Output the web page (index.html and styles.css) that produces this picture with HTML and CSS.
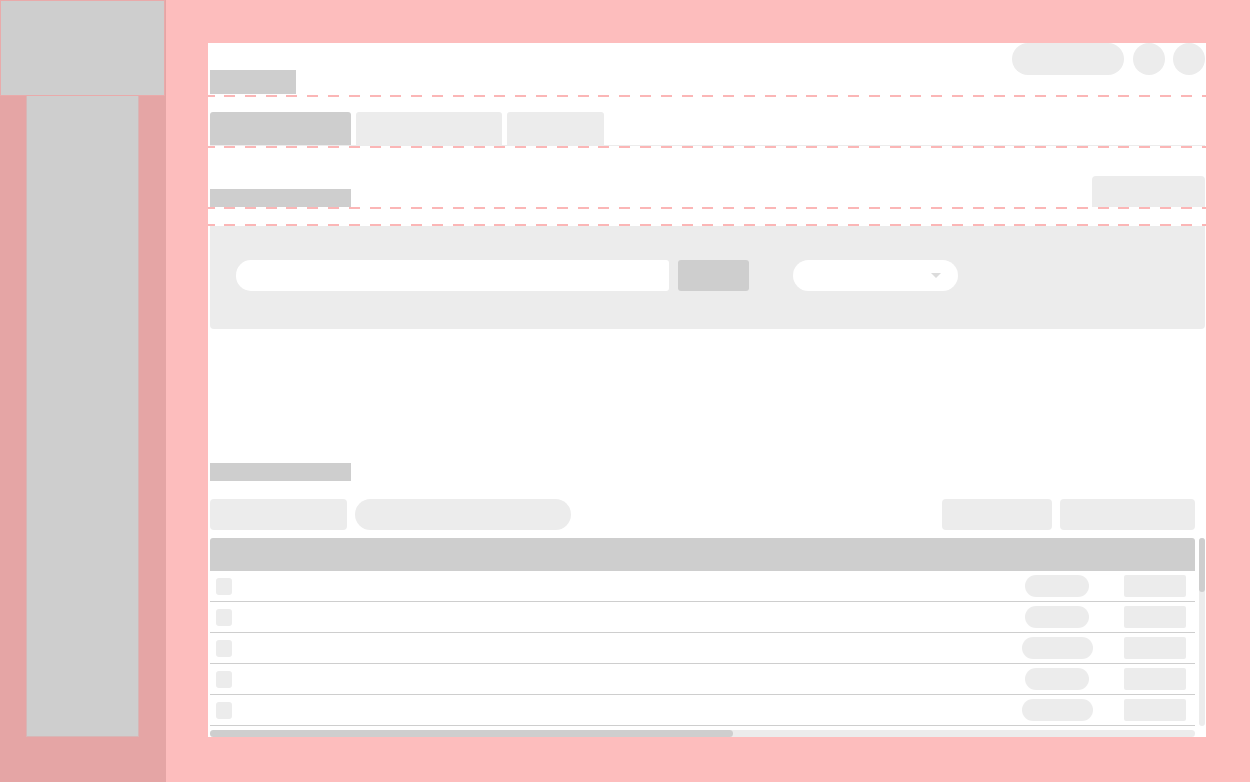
FILE: index.html
```html
<!DOCTYPE html>
<html lang="en">
<head>
<meta charset="utf-8">
<title>Wireframe</title>
<link rel="stylesheet" href="styles.css">
</head>
<body>
<div class="app">
  <aside class="sidebar">
    <div class="side-head"></div>
    <div class="side-col"></div>
  </aside>
  <main class="stage">
    <section class="panel">
      <header class="topbar">
        <div class="title"></div>
        <div class="top-actions">
          <div class="top-pill"></div>
          <div class="circle"></div>
          <div class="circle"></div>
        </div>
      </header>
      <div class="dash"></div>
      <nav class="tabs">
        <div class="tab tab-active"></div>
        <div class="tab tab-2"></div>
        <div class="tab tab-3"></div>
      </nav>
      <div class="dash"></div>
      <div class="section-head">
        <div class="bar"></div>
        <div class="head-btn"></div>
      </div>
      <div class="dash"></div>
      <div class="dash dash-gap"></div>
      <div class="filter">
        <div class="search"></div>
        <div class="search-btn"></div>
        <div class="select">
          <svg class="caret" width="10" height="5" viewBox="0 0 10 5"><polygon points="0,0 10,0 5,5" fill="#dcdcdc"/></svg>
        </div>
      </div>
      <div class="bar bar-second"></div>
      <div class="toolbar">
        <div class="tool-btn tool-a"></div>
        <div class="tool-pill"></div>
        <div class="tool-spacer"></div>
        <div class="tool-btn tool-b"></div>
        <div class="tool-btn tool-c"></div>
      </div>
      <div class="table-wrap">
        <div class="table">
          <div class="thead"></div>
          <div class="row"><div class="check"></div><div class="tag"></div><div class="cellbox"></div></div>
          <div class="row"><div class="check"></div><div class="tag"></div><div class="cellbox"></div></div>
          <div class="row"><div class="check"></div><div class="tag tag-wide"></div><div class="cellbox"></div></div>
          <div class="row"><div class="check"></div><div class="tag"></div><div class="cellbox"></div></div>
          <div class="row"><div class="check"></div><div class="tag tag-wide"></div><div class="cellbox"></div></div>
          <div class="hscroll"><div class="hthumb"></div></div>
        </div>
        <div class="vscroll"><div class="vthumb"></div></div>
      </div>
    </section>
  </main>
</div>
</body>
</html>
```

FILE: styles.css
```css
* { box-sizing: border-box; }

html, body {
  margin: 0;
  padding: 0;
  background: #fdbdbd;
  font-family: "Liberation Sans", Arial, sans-serif;
}

.app {
  display: flex;
  width: 1250px;
  height: 782px;
  background: #fdbdbd;
}

.sidebar {
  width: 166px;
  height: 782px;
  background: #e5a5a5;
  display: flex;
  flex-direction: column;
  flex-shrink: 0;
}

.side-head {
  width: 165px;
  height: 96px;
  background: #cecece;
  border: 1px solid #e9aaaa;
}

.side-col {
  margin-left: 26px;
  width: 113px;
  height: 641px;
  background: #cecece;
  border-left: 1px solid #d8b6b6;
  border-right: 1px solid #d8b6b6;
  border-bottom: 1px solid #d8b6b6;
}

.stage {
  padding: 43px 44px 45px 42px;
}

.panel {
  width: 998px;
  height: 694px;
  background: #ffffff;
  padding: 0 1px 0 2px;
  display: flex;
  flex-direction: column;
}

.dash {
  height: 2px;
  margin: 0 -1px 0 -2px;
  flex-shrink: 0;
  background-image: repeating-linear-gradient(90deg, #fbb6b6 0 11px, transparent 11px 20.8px);
  background-position: 16px 0;
}

.dash-gap { margin-top: 15px; }

.topbar {
  height: 52px;
  display: flex;
  justify-content: space-between;
  align-items: flex-start;
}

.title {
  margin-top: 27px;
  width: 86px;
  height: 24px;
  background: #cecece;
}

.top-actions {
  display: flex;
  gap: 8px;
}

.top-pill {
  width: 112px;
  height: 32px;
  border-radius: 16px;
  background: #ececec;
  margin-right: 1px;
}

.circle {
  width: 32px;
  height: 32px;
  border-radius: 50%;
  background: #ececec;
}

.tabs {
  display: flex;
  gap: 5px;
  padding-top: 15px;
  border-bottom: 1px solid #ececec;
}

.tab {
  height: 33px;
  border-radius: 3px 3px 0 0;
  background: #ececec;
}

.tab-active { width: 141px; background: #cecece; }
.tab-2 { width: 146px; }
.tab-3 { width: 97px; }

.section-head {
  height: 59px;
  display: flex;
  justify-content: space-between;
  align-items: flex-end;
}

.bar {
  width: 141px;
  height: 18px;
  background: #cecece;
}

.head-btn {
  width: 113px;
  height: 31px;
  border-radius: 4px 4px 0 0;
  background: #ececec;
}

.filter {
  height: 103px;
  background: #ececec;
  border-radius: 0 0 4px 4px;
  padding: 34px 26px 38px;
  display: flex;
  align-items: center;
}

.search {
  width: 433px;
  height: 31px;
  background: #ffffff;
  border-radius: 15px 3px 3px 15px;
}

.search-btn {
  margin-left: 9px;
  width: 71px;
  height: 31px;
  background: #cecece;
  border-radius: 3px;
}

.select {
  margin-left: 44px;
  width: 165px;
  height: 31px;
  background: #ffffff;
  border-radius: 15.5px;
  display: flex;
  align-items: center;
  justify-content: flex-end;
  padding-right: 17px;
}

.caret { display: block; }

.bar-second { margin-top: 134px; flex-shrink: 0; }

.toolbar {
  margin-top: 18px;
  margin-right: 10px;
  height: 31px;
  display: flex;
  flex-shrink: 0;
}

.tool-btn {
  height: 31px;
  background: #ececec;
  border-radius: 4px;
}

.tool-a { width: 137px; }
.tool-b { width: 110px; }
.tool-c { width: 135px; margin-left: 8px; }

.tool-pill {
  margin-left: 8px;
  width: 216px;
  height: 31px;
  border-radius: 15.5px;
  background: #ececec;
}

.tool-spacer { flex: 1; }

.table-wrap {
  margin-top: 8px;
  display: flex;
  gap: 4px;
  align-items: flex-start;
}

.table {
  width: 985px;
  display: flex;
  flex-direction: column;
}

.thead {
  height: 33px;
  background: #cecece;
  border-radius: 3px 3px 0 0;
}

.row {
  height: 31px;
  border-bottom: 1px solid #cecece;
  display: grid;
  grid-template-columns: 1fr 80px 62px;
  column-gap: 27px;
  align-items: center;
  padding: 0 9px 0 6px;
}

.check {
  width: 16px;
  height: 17px;
  border-radius: 3px;
  background: #ececec;
}

.tag {
  justify-self: center;
  width: 64px;
  height: 22px;
  border-radius: 11px;
  background: #ececec;
}

.tag-wide { width: 71px; }

.cellbox {
  height: 22px;
  border-radius: 2px;
  background: #ececec;
}

.hscroll {
  margin-top: 4px;
  height: 7px;
  border-radius: 4px;
  background: #ececec;
}

.hthumb {
  width: 523px;
  height: 7px;
  border-radius: 4px;
  background: #cecece;
}

.vscroll {
  width: 6px;
  height: 188px;
  border-radius: 3px;
  background: #ececec;
}

.vthumb {
  height: 54px;
  border-radius: 3px;
  background: #cecece;
}
```
